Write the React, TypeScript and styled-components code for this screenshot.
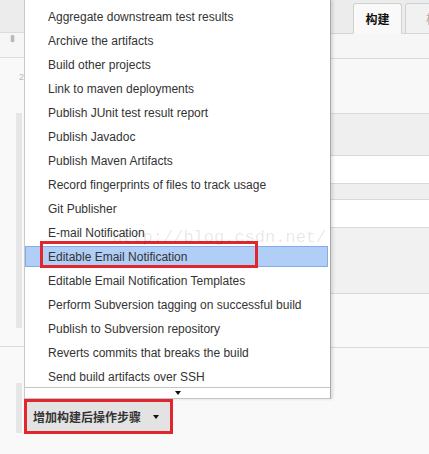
import React from "react";
import styled, { createGlobalStyle } from "styled-components";

const Global = createGlobalStyle`
  html, body { margin: 0; padding: 0; background: #f9f9f9; }
  body { font-family: "Liberation Sans", Arial, sans-serif; }
  * { box-sizing: border-box; }
`;

const Page = styled.div`
  position: relative;
  width: 429px;
  height: 454px;
  overflow: hidden;
  display: grid;
  grid-template-columns: 24px 307px 98px;
  background: #f9f9f9;
`;

/* ---------- left gutter (form behind the popup) ---------- */
const Gutter = styled.div`
  display: flex;
  flex-direction: column;
`;

const GutterBlock = styled.div<{ $h: number; $bg: string; $line?: boolean }>`
  position: relative;
  height: ${(p) => p.$h}px;
  flex: none;
  background: ${(p) => p.$bg};
  border-bottom: ${(p) => (p.$line ? "1px solid #dcdcdc" : "none")};
  display: flex;
`;

const GutterBar = styled.div<{ $top: number; $h: number }>`
  margin-top: ${(p) => p.$top}px;
  margin-left: 16px;
  width: 6px;
  height: ${(p) => p.$h}px;
  background: #e6e6e6;
`;

const GutterMark = styled.span<{ $top: number; $left: number }>`
  margin-top: ${(p) => p.$top}px;
  margin-left: ${(p) => p.$left}px;
  font-size: 9px;
  line-height: 9px;
  color: #b8b8b8;
`;

/* ---------- popup menu ---------- */
const Center = styled.div`
  display: flex;
  flex-direction: column;
  position: relative;
  z-index: 2;
`;

const Menu = styled.div`
  background: #fff;
  border-left: 1px solid #c8c8c8;
  border-right: 1px solid #a9a9a9;
  box-shadow: 2px 0 3px rgba(0, 0, 0, 0.12);
`;

const List = styled.ul`
  list-style: none;
  margin: 0;
  padding: 4px 0 0 0;
  height: 387px;
  overflow: hidden;
`;

const Item = styled.li`
  position: relative;
  height: 24px;
  padding: 2px 2px 1px 0;
  display: flex;
`;

const ItemBody = styled.div<{ $active?: boolean }>`
  flex: 1;
  display: flex;
  align-items: center;
  padding-left: 22px;
  font-size: 12px;
  color: #333;
  white-space: nowrap;
  border: 1px solid ${(p) => (p.$active ? "#85ace6" : "transparent")};
  background: ${(p) => (p.$active ? "#b1cef6" : "transparent")};
`;

const Annotation = styled.div`
  position: absolute;
  left: 15px;
  top: -3px;
  width: 218px;
  height: 27px;
  border: 3px solid #e2262d;
  pointer-events: none;
`;

const Strip = styled.div`
  height: 12px;
  border-top: 1px solid #c4c4c4;
  border-bottom: 1px solid #c4c4c4;
  display: flex;
  align-items: center;
  justify-content: center;
  background: #fff;
`;

const Caret = styled.span<{ $size?: number }>`
  width: 0;
  height: 0;
  border-left: ${(p) => (p.$size ?? 7) / 2}px solid transparent;
  border-right: ${(p) => (p.$size ?? 7) / 2}px solid transparent;
  border-top: ${(p) => Math.round(((p.$size ?? 7) * 4) / 7)}px solid #111;
`;

const AddButton = styled.button`
  align-self: flex-start;
  width: 149px;
  height: 35px;
  display: flex;
  align-items: center;
  gap: 12px;
  padding: 0 0 0 6px;
  background: #e3e3e3;
  border: 3px solid #e2262d;
  font-family: "Liberation Sans", "Noto Sans CJK SC", sans-serif;
  font-weight: bold;
  font-size: 12px;
  color: #333;
  cursor: pointer;
`;

const Watermark = styled.div`
  position: absolute;
  left: 112px;
  top: 228px;
  font-family: "Liberation Mono", monospace;
  font-size: 17px;
  color: rgba(0, 0, 0, 0.1);
  pointer-events: none;
  z-index: 3;
  white-space: nowrap;
`;

/* ---------- right side (tabs + form rows) ---------- */
const Right = styled.div`
  display: flex;
  flex-direction: column;
`;

const TabBar = styled.div`
  height: 34px;
  flex: none;
  display: flex;
  align-items: flex-end;
  gap: 3px;
  padding-left: 22px;
  background: #ececec;
  border-bottom: 1px solid #d6d6d6;
`;

const Tab = styled.div<{ $active?: boolean }>`
  flex: none;
  width: ${(p) => (p.$active ? "49px" : "60px")};
  height: 31px;
  margin-bottom: -1px;
  display: flex;
  align-items: center;
  justify-content: ${(p) => (p.$active ? "center" : "flex-start")};
  padding-left: ${(p) => (p.$active ? "0" : "20px")};
  background: ${(p) => (p.$active ? "#f9f9f9" : "#f1f1f1")};
  border: 1px solid #d0d0d0;
  border-bottom: ${(p) => (p.$active ? "1px solid #f9f9f9" : "1px solid #d6d6d6")};
  border-radius: 3px 3px 0 0;
  font-family: "Noto Sans CJK SC", sans-serif;
  font-size: 12px;
  font-weight: ${(p) => (p.$active ? "bold" : "normal")};
  color: ${(p) => (p.$active ? "#111" : "#aaa")};
  white-space: nowrap;
  overflow: hidden;
`;

const Row = styled.div<{ $h: number; $bg: string }>`
  flex: none;
  height: ${(p) => p.$h}px;
  background: ${(p) => p.$bg};
  border-bottom: 1px solid #d9d9d9;
`;

const Rest = styled.div`
  flex: 1;
  background: #f9f9f9;
`;

const items = [
  "Aggregate downstream test results",
  "Archive the artifacts",
  "Build other projects",
  "Link to maven deployments",
  "Publish JUnit test result report",
  "Publish Javadoc",
  "Publish Maven Artifacts",
  "Record fingerprints of files to track usage",
  "Git Publisher",
  "E-mail Notification",
  "Editable Email Notification",
  "Editable Email Notification Templates",
  "Perform Subversion tagging on successful build",
  "Publish to Subversion repository",
  "Reverts commits that breaks the build",
  "Send build artifacts over SSH",
];

const rows: { h: number; bg: string }[] = [
  { h: 25, bg: "#f6f6f6" },
  { h: 55, bg: "#f8f8f8" },
  { h: 42, bg: "#efefef" },
  { h: 28, bg: "#ffffff" },
  { h: 16, bg: "#efefef" },
  { h: 28, bg: "#ffffff" },
  { h: 66, bg: "#f1f1f1" },
  { h: 54, bg: "#f9f9f9" },
];

export default function App() {
  return (
    <>
      <Global />
      <Page>
        <Gutter>
          <GutterBlock $h={33} $bg="#ececec" $line />
          <GutterBlock $h={25} $bg="#f6f6f6" $line>
            <GutterMark $top={1} $left={10}>▮</GutterMark>
          </GutterBlock>
          <GutterBlock $h={55} $bg="#f9f9f9">
            <GutterMark $top={15} $left={19}>2</GutterMark>
          </GutterBlock>
          <GutterBlock $h={234} $bg="#f9f9f9" $line>
            <GutterBar $top={0} $h={215} />
          </GutterBlock>
          <GutterBlock $h={106} $bg="#f9f9f9">
            <GutterBar $top={36} $h={50} />
          </GutterBlock>
        </Gutter>

        <Center>
          <Menu>
            <List>
              {items.map((t) => {
                const active = t === "Editable Email Notification";
                return (
                  <Item key={t}>
                    <ItemBody $active={active}>{t}</ItemBody>
                    {active && <Annotation />}
                  </Item>
                );
              })}
            </List>
            <Strip>
              <Caret />
            </Strip>
          </Menu>
          <AddButton>
            增加构建后操作步骤
            <Caret />
          </AddButton>
        </Center>

        <Right>
          <TabBar>
            <Tab $active>构建</Tab>
            <Tab>构建后操作</Tab>
          </TabBar>
          {rows.map((r, i) => (
            <Row key={i} $h={r.h} $bg={r.bg} />
          ))}
          <Rest />
        </Right>

        <Watermark>http://blog.csdn.net/</Watermark>
      </Page>
    </>
  );
}
